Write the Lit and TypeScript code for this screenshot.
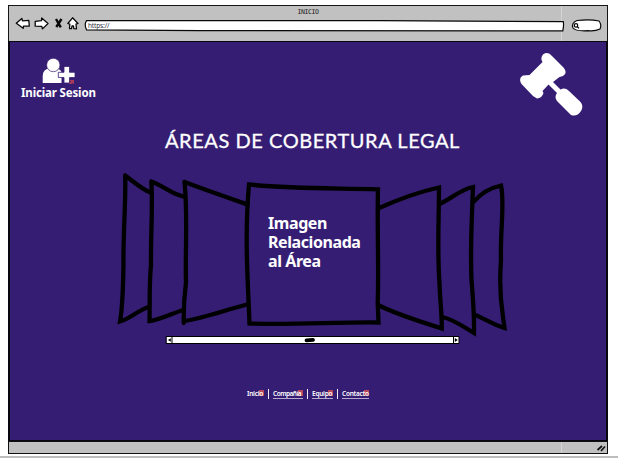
import { LitElement, html, css, svg } from "lit";
import { customElement } from "lit/decorators.js";

const panels = [
  "M125.2 175.500C133 181 141 189 150.500 192.500M125.200 175.500C126 203 123 232 123.500 264C123 284 123 305 120 321.500C130 319 138 310 149 307",
  "M151.300 181.500C162 185 173 195 184 196.500M151.300 181.500C153 205 150.500 240 151 265C149 285 150 306 149.500 321C160 320 173 313 183 310",
  "M184.500 182C203 189 226 197 247.500 204.500M184.500 182C188 215 185 252 186 282C184 298 183.500 310 183.700 323M184 321C205 318 225 310 247 304.500",
  "M378 208.500C397 200 418 192 439 187.500C439 218 437 250 439.500 283C440 301 442 314 441.800 328.500C419 321 398 315 378 305",
  "M439.500 204C451 199 461 189 473 187C472 215 470 247 471.500 280C473 298 474.500 315 474 333C464 327 453 319 442 317",
  "M474 201.500C481 193 490 188 501 185.500C505 203 500 230 501 260C499 285 501 304 503 317L504.500 328C493 325 484 318 475 315",
];

@customElement("app-toolbar")
export class AppToolbar extends LitElement {
  static styles = css`
    :host { display: flex; flex-direction: column; height: 36px; flex: none; box-sizing: border-box; background: linear-gradient(90deg, transparent 552px, #d5d5d5 552px, #d5d5d5 553px, transparent 553px) #c1c1c1; border: 1px solid #151515; border-bottom: 0; font-family: "Noto Sans", sans-serif; }
    .title { height: 12px; line-height: 12px; font-size: 6.500px; text-align: center; color: #171717; font-family: "DejaVu Sans Mono", monospace; letter-spacing: -0.400px; }
    .row { display: flex; height: 20px; }
    .nav { width: 75px; height: 20px; flex: none; margin-top: -4px; margin-left: 1px; }
    .url { position: relative; width: 481px; height: 12px; margin-top: 1px; margin-left: -1px; }
    .url svg, .search svg { display: block; overflow: visible; }
    .url span { position: absolute; left: 4px; top: 1px; font-size: 6.500px; line-height: 11px; color: #303040; letter-spacing: -0.150px; }
    .search { margin-left: 6px; margin-top: 1px; }
  `;
  render() {
    return html`
      <div class="title">INICIO</div>
      <div class="row">
        <svg class="nav" viewBox="10 14 75 20" fill="#fff" stroke="#080808" stroke-width="1.300" stroke-linejoin="round">
          <path d="M16.300 23.200L21.800 18.500L22.500 20.800L28.800 20.400L29.300 26L23.500 26.200L23.200 28.300Z" />
          <path d="M35.200 21.400L41.500 20.700L41.700 18L48 23.500L42.500 28.900L41.800 26.400L35.200 26.200Z" />
          <path d="M67.800 23.500L72.600 17.800L78 23.500L76 24.200L76.500 28.800L73.800 28.700L73.500 26H72L71.500 28.700H69.500L69.800 24.200Z" />
          <path d="M56 19L60.800 27.300M61.500 19L56.300 27" stroke-width="2.400" />
        </svg>
        <div class="url">
          <svg width="481" height="12" viewBox="84 19 481 12" fill="#fff" stroke="#080808" stroke-width="1.200">
            <path d="M86.500 20.500Q250 20.500 380 20.700Q470 21.500 563.300 21.600Q564 25 562.800 30.900Q350 31.200 200 30.600L86.500 29.800Q84 25 86.500 20.500Z" />
          </svg>
          <span>https://</span>
        </div>
        <div class="search">
          <svg width="31" height="13" viewBox="571 19 31 13" fill="#fff" stroke="#080808" stroke-width="1.200">
            <path d="M577 20.500C584 19.600 594 19.900 599 21Q602 25 600 29Q595 31.500 588 30.700C582 31 575 31 573 28Q571 23 577 20.500Z" />
            <circle cx="576" cy="25.400" r="1.700" fill="none" />
            <path d="M577.300 26.700L579 28.300" />
          </svg>
        </div>
      </div>
    `;
  }
}

@customElement("area-carousel")
export class AreaCarousel extends LitElement {
  static styles = css`
    :host { display: block; position: relative; width: 400px; height: 184px; }
    .frames { display: block; }
    .caption { position: absolute; left: 158px; top: 54px; font: 700 16px/19px "Noto Sans", sans-serif; color: #fff; white-space: pre; letter-spacing: -0.420px; }
  `;
  render() {
    return html`
      <svg class="frames" width="400" height="184" viewBox="110 160 400 184" fill="none" stroke="#000" stroke-width="4.300" stroke-linecap="round">
        ${panels.map((d) => svg`<path d=${d} />`)}
        <path d="M249 184.500C292 189 335 188 378 189.300C377 230 379 269 377.700 302L378.500 322.500C335 322 295 325 249.500 323.500C248.500 290 244 240 249 184.500Z" stroke-linejoin="miter" />
        <path d="M166.500 336.500H459V343.500H166.500Z" fill="#fff" stroke-width="1" />
        <path d="M172 336V344M453.500 336V344" stroke-width="1" stroke-linecap="butt" />
        <path d="M170.800 338.300V341.700L168 340ZM454.800 338V342L457.800 340Z" fill="#000" stroke="none" />
        <path d="M306.500 340.300L313 339.800" stroke-width="3.800" />
      </svg>
      <div class="caption">Imagen
Relacionada
al Área</div>
    `;
  }
}

@customElement("app-root")
export class AppRoot extends LitElement {
  static styles = css`
    :host { display: flex; flex-direction: column; height: 458px; background: #fff; overflow: hidden; font-family: "Noto Sans", sans-serif; }
    .window { display: flex; flex-direction: column; width: 600px; height: 449px; margin: 5px 0 0 8px; flex: none; }
    .page { box-sizing: border-box; height: 400px; flex: none; background: #361d74; border: solid #09060f; border-width: 1px 2px 1px; color: #fff; display: flex; flex-direction: column; }
    .header { display: flex; justify-content: space-between; height: 85px; flex: none; }
    .login { display: flex; flex-direction: column; margin: 16px 0 0 11px; }
    .login svg { margin-left: 21px; }
    .login span { font-size: 11.500px; line-height: 16px; font-weight: 700; white-space: nowrap; letter-spacing: -0.150px; margin-top: 1px; }
    .gavel { margin: 9px 22px 0 0; }
    h1 { margin: -1px 0 1px 155px; font: 400 20px/28px Lato, sans-serif; height: 33px; flex: none; white-space: nowrap; letter-spacing: 0.560px; -webkit-text-stroke: 0.300px #fff; }
    area-carousel { margin-left: 100px; flex: none; }
    .links { display: flex; margin: 44px 0 0 237px; height: 12px; line-height: 12px; font-size: 6.500px; font-weight: 600; letter-spacing: -0.250px; align-items: center; }
    .item { position: relative; z-index: 0; flex: none; height: 8px; line-height: 7px; white-space: nowrap; }
    .item.linked { border-bottom: 1px solid #b6abce; }
    .item::after { content: ""; position: absolute; z-index: -1; right: 0; top: 0; width: 5px; height: 6px; background: #b9475c; }
    .bar { width: 1px; height: 10px; background: #eee; margin: 0 4px; flex: none; }
    .first { width: 17px; } .second { width: 30px; letter-spacing: -0.500px; } .third { width: 21px; } .fourth { width: 27px; }
    .footer { height: 13px; box-sizing: border-box; background: linear-gradient(90deg, transparent 552px, #d5d5d5 552px, #d5d5d5 553px, transparent 553px) #c1c1c1; border: solid #101010; border-width: 1px; display: flex; justify-content: flex-end; }
    .strip { height: 2px; margin-top: 2px; background: #bdbdbf; flex: none; }
  `;
  render() {
    return html`
      <div class="window">
        <app-toolbar></app-toolbar>
        <main class="page">
          <div class="header">
            <div class="login">
              <svg width="34" height="26" viewBox="42 58 34 26" fill="#fff">
                <path d="M42.700 83V76Q43 69 49 68.500H56Q60 68.700 61.500 72V83Z" />
                <circle cx="53.300" cy="65" r="6.700" stroke="#361d74" stroke-width=".7" />
                <path d="M64 66.500H69.500V72.300H75V77.500H69.500V83H64V77.500H58.300V72.300H64Z" stroke="#361d74" stroke-width=".8" />
                <path d="M69 80H74V84.500L72.500 83L70 85L69 83.500L71 81.500Z" fill="#a93c58" />
              </svg>
              <span>Iniciar Sesion</span>
            </div>
            <svg class="gavel" width="65" height="66" viewBox="519 51 65 66" fill="#fff">
              <path d="M543 54.500Q548 51 552 56L563.500 67.500Q568 73 563 76L559.500 77L553 82L560.500 89.500Q565 87 569 91L580.500 102Q584 106 581 111Q577 117 571 115L557 101Q554 97 557 93L548.500 84.500L542.500 91L543.500 93Q542 98 537 98.500L533 96L521.500 84Q518 78 523 75.500L529.500 75L542.500 62Q540 58 543 54.500Z" />
            </svg>
          </div>
          <h1>ÁREAS DE COBERTURA LEGAL</h1>
          <area-carousel></area-carousel>
          <nav class="links">
            <span class="item first">Inicio</span><i class="bar"></i>
            <span class="item linked second">Compañía</span><i class="bar"></i>
            <span class="item linked third">Equipo</span><i class="bar"></i>
            <span class="item linked fourth">Contacto</span>
          </nav>
        </main>
        <footer class="footer">
          <svg width="12" height="11" viewBox="595 442 12 11" stroke="#111" stroke-width="1.700" fill="none">
            <path d="M597.500 450L602 446M601 451L605 446.500" />
          </svg>
        </footer>
      </div>
      <div class="strip"></div>
    `;
  }
}
